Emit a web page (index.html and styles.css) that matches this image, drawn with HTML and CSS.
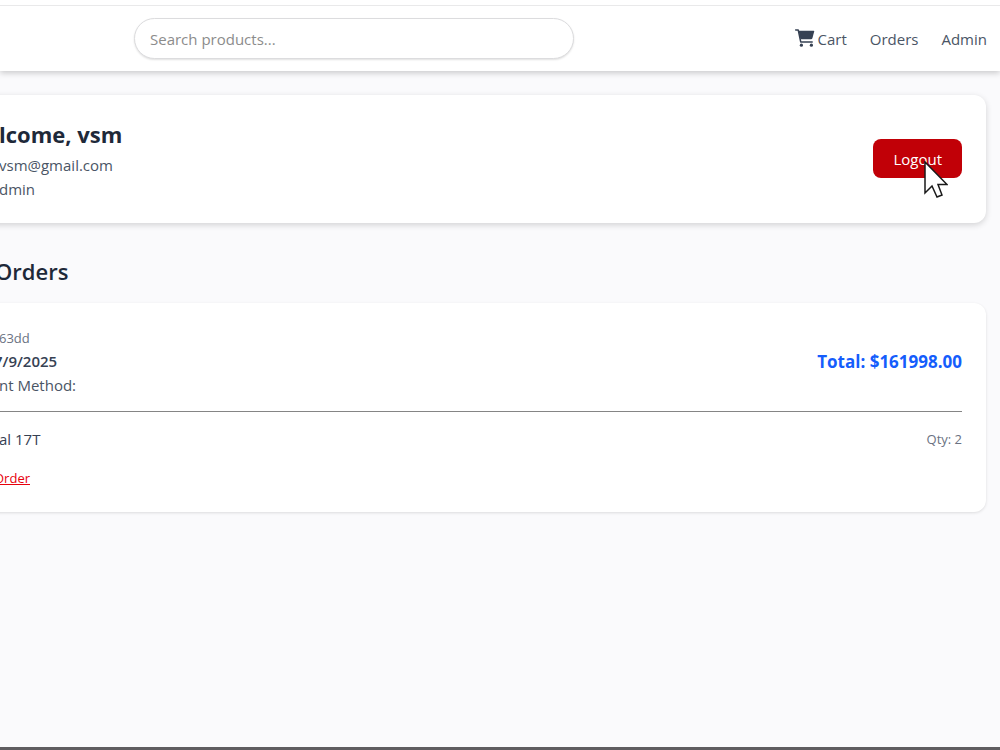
FILE: index.html
```html
<!DOCTYPE html>
<html lang="en">
<head>
    <meta charset="UTF-8">
    <meta name="viewport" content="width=device-width, initial-scale=1.0">
    <title>My Profile</title>
    <link rel="stylesheet" href="styles.css">
</head>
<body>
    <header class="navbar">
        <form class="search">
            <input type="text" class="search-input" placeholder="Search products..." aria-label="Search products">
        </form>
        <nav class="nav-links">
            <a href="#" class="cart-link">
                <svg class="cart-icon" viewBox="0 0 20 18" aria-hidden="true">
                    <path d="M0.7 0.9H3.2L5.7 12.9H17.2" fill="none" stroke="currentColor" stroke-width="1.5" stroke-linecap="round" stroke-linejoin="round"/>
                    <path d="M3.6 1.7H18.6Q19.4 1.7 19.2 2.5L17.4 9.2Q17.1 10.3 16 10.3H5.4Z" fill="currentColor"/>
                    <circle cx="6.4" cy="16.2" r="1.6" fill="currentColor"/>
                    <circle cx="16.4" cy="16.2" r="1.6" fill="currentColor"/>
                </svg>
                Cart
            </a>
            <a href="#">Orders</a>
            <a href="#">Admin</a>
        </nav>
    </header>
    <main class="profile">
        <section class="card user-card">
            <div>
                <h1>lcome, vsm</h1>
                <p class="user-line">vsm@gmail.com</p>
                <p class="user-line">dmin</p>
            </div>
            <button type="button" class="logout">
                Logout
                <svg class="pointer" viewBox="0 0 24 37" aria-hidden="true">
                    <path d="M1 1V32L8 25L13 36L18 34L14 23.5H23Z" fill="#fff" stroke="#1a1a1a" stroke-width="1.5"/>
                </svg>
            </button>
        </section>
        <h2>Orders</h2>
        <section class="card order-card">
            <div class="order-head">
                <div>
                    <p class="order-id">63dd</p>
                    <p class="order-date bleed">7/9/2025</p>
                    <p class="order-payment">nt Method:</p>
                </div>
                <p class="order-total">Total: $161998.00</p>
            </div>
            <div class="order-item">
                <span>al 17T</span>
                <span class="qty">Qty: 2</span>
            </div>
            <button type="button" class="cancel bleed">Order</button>
        </section>
    </main>
</body>
</html>
```
FILE: styles.css
```css
* {
    box-sizing: border-box;
}
body {
    font-family: "Open Sans", "Noto Sans", sans-serif;
    font-size: 15px;
    line-height: 24px;
    min-height: 100vh;
    margin: 0;
    background-color: #fafafc;
    color: #364153;
    border-top: 5px solid #fff;
    border-bottom: 3px solid #5f5d60;
    overflow-x: hidden;
}
h1, h2, p {
    margin: 0;
}
.navbar {
    display: flex;
    align-items: center;
    justify-content: space-between;
    padding: 12px 13px 12px 134px;
    background-color: #fff;
    border-top: 1px solid #e9e9ea;
    box-shadow: 0 2px 6px rgba(0, 0, 0, 0.2);
}
.search {
    flex: 0 1 440px;
}
.search-input {
    display: block;
    width: 100%;
    padding: 8px 15px 7px;
    border: 1px solid #dcdcde;
    border-radius: 24px;
    font: inherit;
    background-color: #fff;
    box-shadow: 0 1px 2px rgba(0, 0, 0, 0.12);
}
.search-input::placeholder {
    color: #8c8c8c;
    opacity: 1;
}
.nav-links {
    display: flex;
    gap: 23px;
}
.nav-links a {
    color: #4a5565;
    text-decoration: none;
}
.cart-link {
    display: flex;
    gap: 3px;
}
.cart-icon {
    width: 20px;
    height: 18px;
    margin-top: 2px;
    color: #364153;
}
.profile {
    margin-left: -39px;
    padding: 24px 14px;
}
.card {
    background-color: #fff;
    border-radius: 12px;
    padding: 24px 24px 22px;
}
.user-card {
    display: flex;
    align-items: center;
    justify-content: space-between;
    box-shadow: 0 2px 6px rgba(0, 0, 0, 0.16);
}
h1 {
    margin-bottom: 4px;
    font-size: 22px;
    line-height: 30px;
    font-weight: 700;
    color: #1e2939;
}
.user-line {
    color: #4a5565;
}
.logout {
    position: relative;
    margin-bottom: 4px;
    padding: 8px 20px 7px;
    border: none;
    border-radius: 8px;
    background-color: #c10007;
    color: #fff;
    font: inherit;
}
.pointer {
    position: absolute;
    left: 51px;
    top: 22px;
    width: 24px;
    height: 37px;
}
h2 {
    margin: 32px 0 16px;
    padding-left: 20px;
    font-size: 22px;
    line-height: 32px;
    font-weight: 600;
    color: #1e2939;
}
.order-card {
    box-shadow: 0 1px 3px rgba(0, 0, 0, 0.12);
}
.order-head {
    display: flex;
    align-items: center;
    justify-content: space-between;
    padding-bottom: 14px;
    border-bottom: 1px solid #858585;
}
.order-id {
    font-size: 13px;
    line-height: 22px;
    color: #6a7282;
}
.order-date {
    font-weight: 600;
}
.order-payment {
    color: #4a5565;
}
.order-total {
    font-size: 17px;
    font-weight: 700;
    color: #155dfc;
}
.order-item {
    display: flex;
    justify-content: space-between;
    padding: 15px 0;
}
.qty {
    font-size: 13px;
    color: #6a7282;
}
.cancel {
    display: block;
    padding: 0;
    border: none;
    background: none;
    color: #e7000b;
    font: inherit;
    font-size: 13px;
    text-decoration: underline;
}
/* text that runs past the left edge of the window */
.bleed {
    margin-left: -5px;
}
```
